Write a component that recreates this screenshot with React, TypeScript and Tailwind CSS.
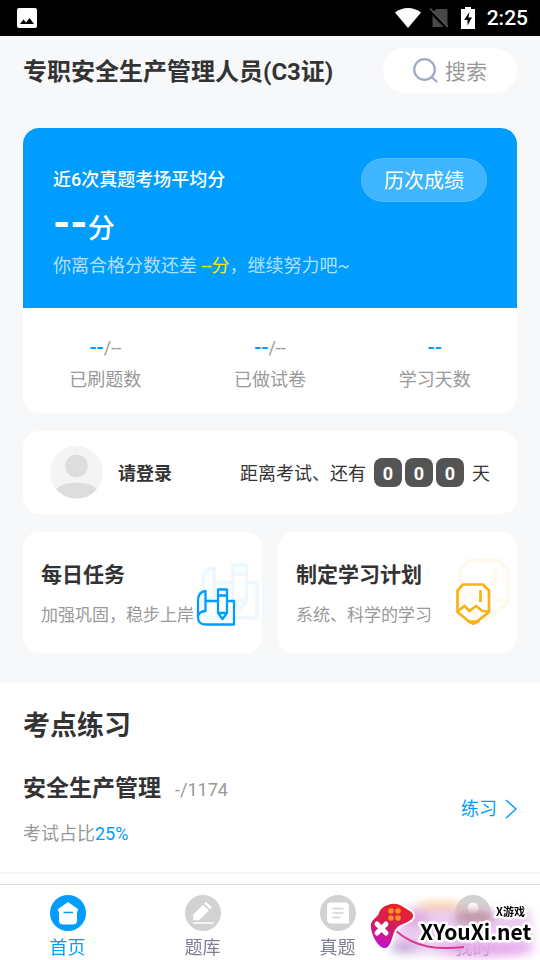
import { ReactNode } from 'react';

type StatType = { label: string; value: string; total?: string };

const stats: StatType[] = [
  { label: '已刷题数', value: '--', total: '/--' },
  { label: '已做试卷', value: '--', total: '/--' },
  { label: '学习天数', value: '--' },
];

const StatusBar = () => (
  <div className="flex h-9 items-center justify-between bg-black pr-3 pl-[17px] text-white">
    <svg className="size-5" viewBox="0 0 20 20">
      <rect width="20" height="20" rx="2" fill="#fff" />
      <path d="M3 16l3.5-4.5 2.5 3 3.500-4.500 4.500 6z" fill="#000" />
    </svg>
    <div className="flex items-center">
      <svg className="h-5 w-[26px]" viewBox="0 0 26 20">
        <path d="M0 4.500C7.500-1.500 18.500-1.500 26 4.500L13 20z" fill="#fff" />
      </svg>
      <svg className="ml-2 h-5 w-5" viewBox="0 0 20 20">
        <path d="M7 1h10a1.500 1.500 0 0 1 1.500 1.500V19h-15V5z" fill="#484848" />
        <path d="M0 1.500L18 20" stroke="#000" strokeWidth="3.500" />
        <path d="M1 .5L19 19" stroke="#5a5a5a" strokeWidth="1.500" />
      </svg>
      <svg className="ml-3 h-[22px] w-[14px]" viewBox="0 0 14 22">
        <path d="M4 0h6v2h4v20H0V2h4z" fill="#fff" />
        <path d="M8.500 5L3 13h3.500v5.500L11 10.500H7.500z" fill="#000" />
      </svg>
      <span className="ml-3 text-[21px] leading-6 font-medium">2:25</span>
    </div>
  </div>
);

const Header = () => (
  <header className="flex items-center justify-between">
    <h1 className="pt-[2px] text-2xl leading-9 font-bold whitespace-nowrap">专职安全生产管理人员(C3证)</h1>
    <button type="button" className="flex h-[45px] items-center gap-[6px] rounded-full bg-white px-[30px] text-[21px] leading-8 text-[#999]">
      <svg className="size-[26px]" viewBox="0 0 26 26" fill="none" stroke="#a1aac4" strokeWidth="2.300" strokeLinecap="round">
        <circle cx="11.500" cy="11.500" r="10.300" />
        <path d="M19 19.500l4.500 4" />
      </svg>
      <span className="pt-[2px] whitespace-nowrap">搜索</span>
    </button>
  </header>
);

const ScoreCard = () => (
  <section className="mt-[35px] overflow-hidden rounded-2xl bg-white">
    <div className="flex h-[180px] items-start justify-between bg-[#009dff] px-[30px] pt-[30px] text-white">
      <div>
        <p className="pt-2 text-lg leading-7 font-medium">近6次真题考场平均分</p>
        <p className="pt-[9px] text-[27px] leading-[46px] font-medium">
          <span className="text-[44px] leading-10 font-bold">--</span>分
        </p>
        <p className="text-lg leading-7 whitespace-nowrap text-white/70">
          你离合格分数还差 <span className="text-[#ffea00]">--分</span>，继续努力吧~
        </p>
      </div>
      <button type="button" className="h-11 shrink-0 rounded-full border border-white/10 bg-white/25 px-[22px] pt-[2px] text-xl leading-8">
        历次成绩
      </button>
    </div>
    <dl className="grid grid-cols-3 pt-6 pb-4 text-center text-lg">
      {stats.map((stat) => (
        <div key={stat.label} className="flex flex-col-reverse">
          <dt className="leading-[34px] text-[#999]">{stat.label}</dt>
          <dd className="leading-[30px] text-[#999]">
            <span className="text-[21px] font-medium text-[#009dff]">{stat.value}</span>
            {stat.total}
          </dd>
        </div>
      ))}
    </dl>
  </section>
);

const LoginCard = () => (
  <section className="mt-[18px] flex h-[83px] items-center justify-between rounded-2xl bg-white px-[27px] text-lg leading-7 whitespace-nowrap">
    <a href="#login" className="flex items-center gap-[15px] font-bold">
      <svg className="size-[53px]" viewBox="0 0 53 53">
        <circle cx="26.500" cy="26.500" r="26.500" fill="#f4f4f4" />
        <circle cx="26.500" cy="20" r="11.200" fill="#ddd" />
        <path d="M6.500 43.500C10 34.500 43 34.500 46.500 43.500A26.500 26.500 0 0 1 6.500 43.500z" fill="#ddd" />
      </svg>
      <span className="pt-[2px]">请登录</span>
    </a>
    <div className="flex items-center gap-2">
      <span className="pt-[2px]">距离考试、还有</span>
      <span className="flex gap-[3px]">
        {['0', '0', '0'].map((digit, index) => (
          <span key={index} className="h-[29px] w-7 rounded-lg bg-[#545454] text-center leading-[31px] font-bold text-white">
            {digit}
          </span>
        ))}
      </span>
      <span className="pt-[2px]">天</span>
    </div>
  </section>
);

const scroll = (
  <>
    <path d="M11.500 35v20C7 55 4 58 4 61V45c0-6 3-9.500 7.500-10zM4 61c0 5 3 7.500 7.500 7.500H40V45h-7M11.500 45H24" />
    <path d="M24 33.500h9V57l-4.500 6-4.500-6zM24 39.500h9M24 57h9" />
  </>
);

const badge = (
  <>
    <path d="M14 28.500h20l6 6V56l-12 9.500-3.500 2-4.500-2L8.500 56V34.500z" />
    <path d="M8.500 55.500l7-5.500 5 5 6.500-5 6.500 5 6 .5M31.500 34v12" />
    <path d="M19.500 65.500h10l-5 2z" />
  </>
);

type TaskProps = { title: string; text: string; children: ReactNode };

const TaskCard = ({ title, text, children }: TaskProps) => (
  <a href="#task" className="flex h-[121px] overflow-hidden rounded-2xl bg-white pl-[18px]">
    <div className="min-w-0 flex-1 pt-[27px] whitespace-nowrap">
      <h2 className="text-[21px] leading-8 font-bold">{title}</h2>
      <p className="mt-3 text-[17px] leading-6 text-[#999]">{text}</p>
    </div>
    {children}
  </a>
);

const Practice = () => (
  <section className="flex-1 bg-white">
    <h2 className="px-[23px] pt-[23px] text-[27px] leading-10 font-bold">考点练习</h2>
    <div className="flex items-center justify-between border-b-2 border-[#f5f5f5] px-[23px] pt-6 pb-6">
      <div>
        <h3 className="flex items-baseline gap-[14px] text-[23px] leading-9 font-bold">
          安全生产管理
          <span className="pt-[2px] text-lg leading-9 font-normal text-[#999]">-/1174</span>
        </h3>
        <p className="mt-3 text-lg leading-7 text-[#999]">
          考试占比<span className="text-[#009dff]">25%</span>
        </p>
      </div>
      <a href="#practice" className="flex items-center gap-2 text-lg leading-7 text-[#009dff]">
        练习
        <svg className="h-5 w-3" viewBox="0 0 12 20" fill="none" stroke="currentColor" strokeWidth="1.500">
          <path d="M1 1l10 9-10 9" />
        </svg>
      </a>
    </div>
  </section>
);

const tabs = [
  {
    label: '首页',
    active: true,
    icon: (
      <>
        <path d="M18 7.500l10 7-1.500 2.500V26a3 3 0 0 1-3 3H12.500a3 3 0 0 1-3-3v-9l-1.500-2.500z" fill="#fff" stroke="#fff" strokeLinejoin="round" />
        <path d="M13.500 17.500h9.500" stroke="#009dff" strokeWidth="1.500" />
      </>
    ),
  },
  {
    label: '题库',
    icon: (
      <>
        <path d="M8.500 25v-5.500L18 10l5.500 5.500L14 25zM19.500 8.500l1.500-1.500 5.500 5.500-1.500 1.500z" fill="#fff" stroke="#fff" strokeLinejoin="round" strokeWidth=".5" />
        <path d="M8 28h20.500" stroke="#fff" strokeWidth="1.500" />
      </>
    ),
  },
  {
    label: '真题',
    icon: (
      <>
        <path d="M11 7.500h14a4 4 0 0 1 4 4V28.500H11a4 4 0 0 1-4-4v-13a4 4 0 0 1 4-4z" fill="#fff" />
        <path d="M12.500 13.500h11M12.500 18h11M12.500 22.500h8" stroke="#d2d2d2" strokeWidth="1.500" />
      </>
    ),
  },
  {
    label: '我的',
    icon: (
      <>
        <circle cx="18" cy="13" r="5.500" fill="#fff" />
        <path d="M8 28c1-10 19-10 20 0z" fill="#fff" />
      </>
    ),
  },
];

const TabBar = () => (
  <nav className="sticky bottom-0 grid h-[76px] grid-cols-4 border-t border-[#ddd] bg-white">
    {tabs.map((tab) => (
      <a
        key={tab.label}
        href="#tab"
        className={`flex flex-col items-center pt-[10px] text-lg leading-[34px] ${tab.active ? 'text-[#009dff]' : 'text-[#7d7f95]'}`}
      >
        <svg className="size-9 shrink-0" viewBox="0 0 36 36" fill="none">
          <circle cx="18" cy="18" r="18" fill={tab.active ? '#009dff' : '#d2d2d2'} />
          {tab.icon}
        </svg>
        {tab.label}
      </a>
    ))}
    <SiteMark />
  </nav>
);

const SiteMark = () => (
  <div className="pointer-events-none absolute right-0 bottom-0 h-[64px] w-[172px] overflow-hidden">
    <svg className="size-full" viewBox="0 0 172 64">
      <defs>
        <linearGradient id="pad" gradientUnits="userSpaceOnUse" x1="28" y1="8" x2="14" y2="58">
          <stop offset="0" stopColor="#e8232b" />
          <stop offset=".5" stopColor="#d31a63" />
          <stop offset="1" stopColor="#b914f5" />
        </linearGradient>
        <filter id="glow" x="-30%" y="-60%" width="160%" height="220%">
          <feGaussianBlur stdDeviation="5" />
        </filter>
      </defs>
      <g filter="url(#glow)">
        <path d="M34 14h128l4 42-60 5-82-5z" fill="#e9c3f1" fillOpacity=".85" />
        <ellipse cx="72" cy="10" rx="24" ry="4" fill="#f4bd78" fillOpacity=".8" />
        <ellipse cx="46" cy="22" rx="16" ry="9" fill="#dda0dc" fillOpacity=".7" />
        <ellipse cx="106" cy="22" rx="20" ry="7" fill="#b98b96" fillOpacity=".9" />
        <ellipse cx="36" cy="52" rx="14" ry="5" fill="#8d86b3" fillOpacity=".5" />
        <ellipse cx="118" cy="54" rx="46" ry="7" fill="#e6a0ea" fillOpacity=".8" />
      </g>
      <path d="M28 35c20 17 42 19 68 16" fill="none" stroke="#d9388b" strokeWidth="2" />
      <path
        d="M20 9c6-3 13 0 17 3 4 3 9 4 8 9-2 6-14 6-18 13-3 6-4 19-11 18C9 51 2 36 3 28c2-6 6-6 8-11 1-4 5-7 9-8z"
        fill="url(#pad)"
        stroke="#fff"
        strokeWidth="4"
        paintOrder="stroke"
      />
      <path d="M9 28l9 9M18 28l-9 9" stroke="#fff" strokeWidth="5" strokeLinecap="round" />
      <g fill="#f7941d">
        <circle cx="23" cy="15" r="2.800" />
        <circle cx="30" cy="15" r="2.800" />
        <circle cx="23" cy="22" r="2.800" />
        <circle cx="30" cy="22" r="2.800" />
      </g>
      <g
        fill="#000"
        stroke="#fff"
        strokeWidth="5"
        strokeLinejoin="round"
        paintOrder="stroke"
        className="font-['Noto_Sans_CJK_SC',sans-serif] font-bold"
      >
        <text x="52" y="44" className="text-[21px]">XYouXi.net</text>
        <text x="128" y="20" className="text-[11px]">X游戏</text>
      </g>
    </svg>
  </div>
);

const App = () => (
  <div lang="zh-CN" className="flex min-h-screen flex-col bg-[#f7f8fa] font-['Roboto','Noto_Sans_CJK_SC',sans-serif] text-[#333]">
    <StatusBar />
    <main className="flex flex-1 flex-col">
      <div className="px-[23px] pt-3 pb-[30px]">
        <Header />
        <ScoreCard />
        <LoginCard />
        <div className="mt-[18px] grid grid-cols-2 gap-4">
          <TaskCard title="每日任务" text="加强巩固，稳步上岸">
            <svg className="mt-6 h-20 w-[68px] shrink-0" viewBox="0 0 68 80" fill="none" stroke="#009dff" strokeWidth="2.300" strokeLinejoin="round">
              <g transform="translate(3 -41) scale(1.5)" opacity=".07">{scroll}</g>
              {scroll}
            </svg>
          </TaskCard>
          <TaskCard title="制定学习计划" text="系统、科学的学习">
            <svg className="mt-6 h-20 w-[68px] shrink-0" viewBox="0 0 68 80" fill="none" stroke="#f7b318" strokeWidth="2.700" strokeLinejoin="round">
              <g transform="translate(-1 -38) scale(1.5)" opacity=".07">{badge}</g>
              {badge}
            </svg>
          </TaskCard>
        </div>
      </div>
      <Practice />
    </main>
    <TabBar />
  </div>
);

export default App;
